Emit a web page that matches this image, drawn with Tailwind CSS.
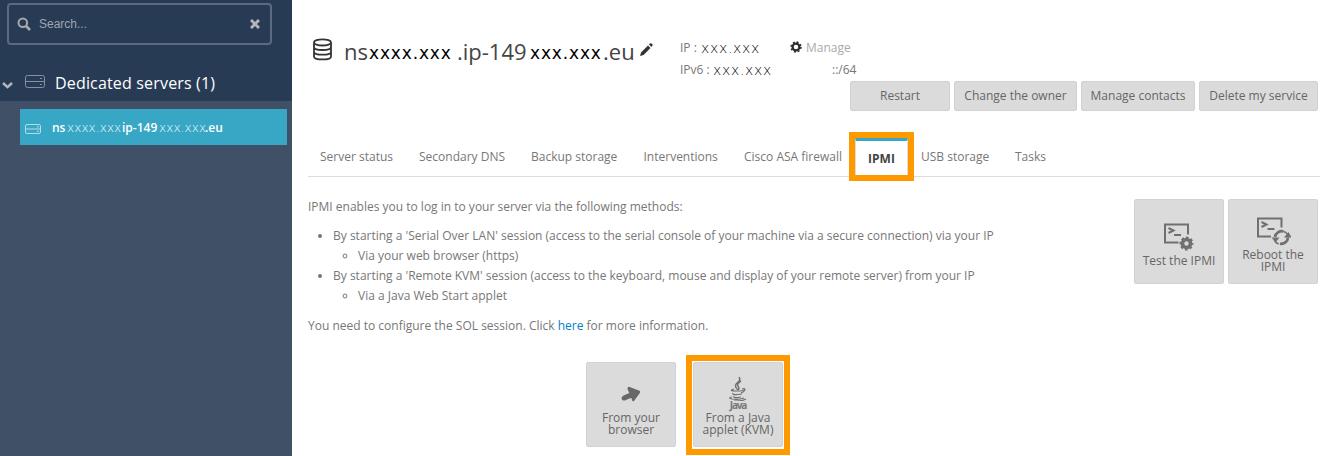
<!DOCTYPE html>
<html lang="en">
<head>
<meta charset="utf-8">
<title>Dedicated server - IPMI</title>
<script src="https://cdn.jsdelivr.net/npm/@tailwindcss/browser@4"></script>
</head>
<body class="flex h-[456px] w-[1323px] overflow-hidden bg-white font-['Open_Sans',sans-serif] text-xs text-[#777]">
<aside class="h-full w-[292px] shrink-0 bg-[#405167]">
  <div class="h-[101px] bg-[#283b55] pt-[3px]">
    <div class="ml-[7px] flex h-[42px] w-[265px] items-center rounded-[4px] border-2 border-[#5c6982] pr-[10px] pl-[8px] font-['Liberation_Sans',sans-serif] text-[#9ea5b0]">
      <svg class="h-[14px] w-[14px]" viewBox="0 0 14 14" fill="none" stroke="#a6a9ae" stroke-width="2"><circle cx="5.8" cy="5.7" r="4.3"/><path d="M9 9l4 4" stroke-width="2.6"/></svg>
      <span class="ml-2 flex-1">Search...</span>
      <svg class="h-[10px] w-[10px]" viewBox="0 0 10 10" stroke="#b3b5b8" stroke-width="3"><path d="M1 1l8 8M9 1l-8 8"/></svg>
    </div>
    <div class="mt-[22px] flex h-[32px] items-center pl-[2px] text-white">
      <svg class="mt-[5px] h-[7px] w-[11px]" viewBox="0 0 11 7" fill="none" stroke="#b4b8be" stroke-width="2.4"><path d="M1 1l4.500 4.200L10 1"/></svg>
      <svg class="mt-[-3px] ml-[12px] h-[15px] w-[20px]" viewBox="0 0 20 15" fill="none" stroke="#8691a1"><rect x=".5" y="1.500" width="19" height="12" rx="2"/><path d="M1 7.500h18M15 4.500h2M15 10.500h2"/></svg>
      <span class="ml-[10px] text-base whitespace-nowrap tracking-[0.17px]">Dedicated servers (1)</span>
    </div>
  </div>
  <div class="mt-[8px] ml-[20px] flex h-[36px] w-[267px] items-center bg-[#38a7c5] pl-[5px] text-[12px] font-semibold text-white">
    <svg class="mt-[3px] h-[12px] w-[16px]" viewBox="0 0 16 12" fill="none" stroke="#b2dce8"><rect x=".5" y="1.500" width="15" height="9" rx="1.500"/><path d="M1 6h14M12 3.800h2M12 8.300h2"/></svg>
    <span class="mt-[2px] ml-[11px] w-[15px]">ns</span><span class="mt-[2px] w-[55px] font-['DejaVu_Sans_Light','DejaVu_Sans'] text-[12px] font-extralight tracking-[0.100px]">xxxx.xxx</span><span class="mt-[2px] w-[37px] whitespace-nowrap">ip-149</span><span class="mt-[2px] w-[46px] font-['DejaVu_Sans_Light','DejaVu_Sans'] text-[12px] font-extralight tracking-[0.100px]">xxx.xxx</span><span class="mt-[2px]">.eu</span>
  </div>
</aside>
<main class="min-w-0 flex-1 pl-[16px]">
  <header class="flex h-[81px] pt-[36px]">
    <div class="flex h-[30px] w-[372px] items-center text-[22px] leading-[30px] text-[#444]">
      <svg class="mt-[-4px] ml-[4px] h-[23px] w-[21px] shrink-0" viewBox="0 0 21 23" fill="none" stroke="#333" stroke-width="1.800"><ellipse cx="10.500" cy="4.400" rx="8.500" ry="3.100"/><path d="M2 4.400v14c0 4 17 4 17 0v-14M2 9c0 4 17 4 17 0M2 13.700c0 4 17 4 17 0"/></svg>
      <span class="ml-[11px] w-[25px] shrink-0">ns</span><span class="mt-[3px] w-[88px] shrink-0 font-['DejaVu_Sans'] text-[17px] tracking-[0.850px] text-black">xxxx.xxx</span><span class="w-[73px] shrink-0">.ip-149</span><span class="mt-[3px] w-[73px] shrink-0 font-['DejaVu_Sans'] text-[17px] tracking-[0.850px] text-black">xxx.xxx</span><span class="w-[31px] shrink-0">.eu</span>
      <svg class="mt-[-4px] ml-[6px] h-[13px] w-[13px] shrink-0" viewBox="0 0 13 13" fill="#333"><path d="M0 13l1-3.500L8 2.500l2.500 2.500-7 7zM9 1.500l1-1q1-.5 2 .3t.500 1.700L11.300 4z"/></svg>
    </div>
    <div class="leading-[22px]">
      <div class="mt-px flex h-[22px]"><span class="w-[21px]">IP :</span><span class="w-[89px] font-['DejaVu_Sans_Light','DejaVu_Sans'] text-[14px] font-extralight text-black tracking-[0.7px]">xxx.xxx</span>
        <svg class="mt-[4px] h-[12px] w-[12px]" viewBox="-6 -6 12 12" fill="none" stroke="#2d2d2d"><circle r="3.400" stroke-width="2.200"/><circle r="4.900" stroke-width="1.600" stroke-dasharray="1.925 1.925"/></svg>
        <span class="ml-[4px] text-[#aaa]">Manage</span></div>
      <div class="flex h-[22px]"><span class="w-[33px] whitespace-nowrap">IPv6 :</span><span class="w-[119px] font-['DejaVu_Sans_Light','DejaVu_Sans'] text-[14px] font-extralight text-black tracking-[0.700px]">xxx.xxx</span><span>::/64</span></div>
    </div>
  </header>
  <div class="ml-[542px] flex h-[30px] gap-1 leading-[28px] text-[#666] [&>button]:rounded-[2px] [&>button]:border [&>button]:border-[#d2d2d2] [&>button]:bg-[#dbdbdb] [&>button]:whitespace-nowrap">
    <button class="w-[100px]">Restart</button><button class="w-[123px]">Change the owner</button><button class="w-[114px]">Manage contacts</button><button class="w-[119px]">Delete my service</button>
  </div>
  <nav class="mt-[21px] flex h-[45px] w-[1012px] border-b border-[#ddd] pl-[12px] leading-[50px] whitespace-nowrap">
    <span class="w-[99px]">Server status</span><span class="w-[112px]">Secondary DNS</span><span class="w-[112.500px]">Backup storage</span><span class="w-[100.500px]">Interventions</span><span class="w-[105px]">Cisco ASA firewall</span>
    <div class="h-[49px] w-[65px] shrink-0 border-[6px] border-[#ff9900] bg-white">
      <div class="h-full border-x border-t-[3px] border-x-[#ddd] border-t-[#38a7c5] text-center leading-[36px] font-bold text-[#444]">IPMI</div>
    </div>
    <span class="ml-[7px] w-[94px]">USB storage</span><span>Tasks</span>
  </nav>
  <div class="flex">
    <section class="w-[826px] pt-[20px] leading-5">
      <p>IPMI enables you to log in to your server via the following methods:</p>
      <ul class="mt-[9px] list-disc pl-[25px]">
        <li>By starting a 'Serial Over LAN' session (access to the serial console of your machine via a secure connection) via your IP
          <ul class="list-[circle] pl-[25px]"><li>Via your web browser (https)</li></ul></li>
        <li>By starting a 'Remote KVM' session (access to the keyboard, mouse and display of your remote server) from your IP
          <ul class="list-[circle] pl-[25px]"><li>Via a Java Web Start applet</li></ul></li>
      </ul>
      <p class="mt-[10px]">You need to configure the SOL session. Click <a class="text-[#0080c8]">here</a> for more information.</p>
    </section>
    <div class="mt-[22px] flex h-[85px] gap-1 leading-[12px] text-[#666] [&>button]:flex [&>button]:w-[90px] [&>button]:flex-col [&>button]:items-center [&>button]:rounded-[2px] [&>button]:border [&>button]:border-[#d2d2d2] [&>button]:bg-[#dbdbdb]">
      <button><svg class="mt-[23px] h-[28px] w-[30px]" viewBox="0 0 30 28" fill="none" stroke="#707070" stroke-width="2"><path d="M14.500 19.500H1V1.500h23v10M4.500 5l5 2.500-5 2.500M10 12h7"/><circle cx="22.500" cy="20.500" r="4" stroke-width="3.600"/><circle cx="22.500" cy="20.500" r="6" stroke-width="2" stroke-dasharray="2.712 2" stroke-dashoffset="1.356"/></svg><span class="mt-[4px] whitespace-nowrap">Test the IPMI</span></button>
      <button><svg class="mt-[17px] h-[29px] w-[35px]" viewBox="0 0 35 29" fill="none" stroke="#707070" stroke-width="2"><path d="M15 19.500H2V1.500h23.500v9M5.500 5l5 2.500-5 2.500M11.500 12h7"/><path d="M19 20a6.700 6.700 0 0 1 8.500-5.500M32 20.500a6.700 6.700 0 0 1-8 6.200" stroke-width="2.800"/><path d="M15.500 20.500h8l-4 5zM28 20.500l4.500-5.500 3 5.500z" fill="#707070" stroke="none"/><path d="M18.800 24q1.500 2.500 4 2.700M27.500 14.500q2.500.5 4 2.800" stroke-width="1.500"/></svg><span class="mt-[3px]">Reboot the<br>IPMI</span></button>
    </div>
  </div>
  <div class="mt-[19px] flex h-[101px] pl-[278px] leading-[12px] text-[#666]">
    <button class="mt-[7px] flex h-[85px] w-[90px] flex-col items-center rounded-[2px] border border-[#d2d2d2] bg-[#dbdbdb]"><svg class="mt-[23px] h-[16px] w-[20px]" viewBox="0 0 20 16" fill="#686868"><path d="M8 .7l10.500 4q1.300.8.500 2L13 15q-1.500 1-2-.8l-.4-2.200q-3 .3-6 2.300-3 1-4-1.300-.5-2.300 2-3.500L8.300 7 6.700 3.500Q6 .7 8 .7z"/></svg><span class="mt-[10px]">From your<br>browser</span></button>
    <div class="ml-[10px] h-[100px] w-[104px] border-[6px] border-[#ff9900] p-px">
      <button class="flex h-[85px] w-[90px] flex-col items-center rounded-[2px] border border-[#d2d2d2] bg-[#dbdbdb]">
        <svg class="mt-[14px] h-[24px] w-[18px]" viewBox="0 0 18 24" fill="none" stroke="#707070" stroke-width="1.200"><path d="M10 0q2 3-1 5-5 4 0 8M12 4q-5 3-2.500 6 1 1-.5 3" stroke-width="1.500"/><path d="M5 12q-6 2 2 2t7-1M13 12q4-1 2.500 1.500Q15 15 12 16M4 16q-1 2 5 1.500l4-.5M5 19q-1 2 4 1.500l3-.5M3 20q-5 1 0 2 7 1 12-1M5 24q8 .5 12-2"/></svg>
        <span class="h-[10px] text-[10px] leading-[8px] font-bold tracking-[-1.200px] text-[#777]">Java</span><span class="mt-px whitespace-nowrap">From a Java<br>applet (KVM)</span>
      </button>
    </div>
  </div>
</main>
</body>
</html>
